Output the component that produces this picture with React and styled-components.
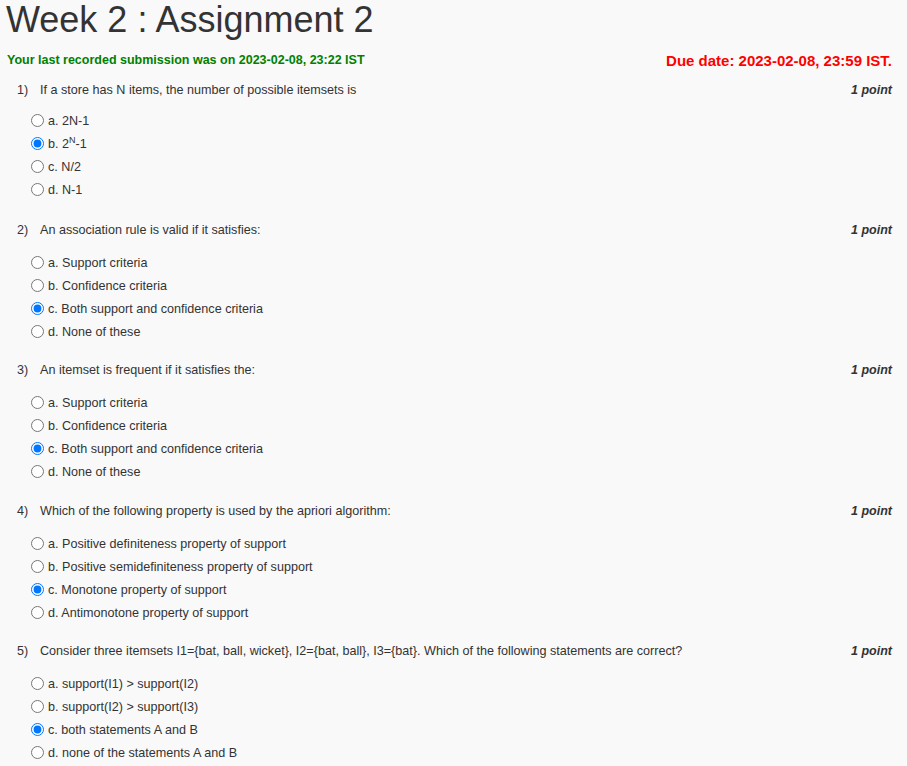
import React from "react";
import styled, { createGlobalStyle } from "styled-components";

const Global = createGlobalStyle`
  html, body { margin: 0; padding: 0; background: #f9f9f9; }
  body { font-family: "Liberation Sans", Arial, sans-serif; color: #333; }
`;

const Page = styled.div`
  padding: 0 15px 0 6px;
  width: 907px;
  box-sizing: border-box;
`;

const Title = styled.h1`
  margin: 0;
  font-size: 36px;
  font-weight: normal;
  line-height: 40px;
  color: #333;
`;

const StatusRow = styled.div`
  display: flex;
  justify-content: space-between;
  align-items: center;
  margin-top: 10px;
  height: 20px;
  padding-left: 1px;
`;

const Submitted = styled.span`
  color: #008000;
  font-weight: bold;
  font-size: 12.5px;
`;

const Due = styled.span`
  color: #f00;
  font-weight: bold;
  font-size: 15px;
`;

const QuestionList = styled.div`
  margin-top: 10px;
  display: flex;
  flex-direction: column;
`;

const Question = styled.div`
  height: ${(p) => p.$h}px;
`;

const Header = styled.div`
  display: flex;
  align-items: center;
  height: 20px;
  font-size: 12.6px;
`;

const Num = styled.span`
  width: 23px;
  padding-left: 11px;
  flex: none;
`;

const Text = styled.span`
  flex: 1;
`;

const Points = styled.span`
  font-weight: bold;
  font-style: italic;
  font-size: 12.5px;
`;

const Options = styled.div`
  margin-top: ${(p) => (p.$first ? 9 : 11)}px;
  display: flex;
  flex-direction: column;
`;

const Option = styled.label`
  display: flex;
  align-items: center;
  height: 23px;
  font-size: 12.6px;
  padding-left: 20px;
`;

const Radio = styled.input`
  width: 13px;
  height: 13px;
  margin: 0 4px 0 5px;
  accent-color: #0075ff;
`;

const Sup = styled.sup`
  font-size: 9px;
  line-height: 0;
`;

const questions = [
  {
    text: "If a store has N items, the number of possible itemsets is",
    opts: ["a. 2N-1", <>b. 2<Sup>N</Sup>-1</>, "c. N/2", "d. N-1"],
    sel: 1,
  },
  {
    text: "An association rule is valid if it satisfies:",
    opts: ["a. Support criteria", "b. Confidence criteria", "c. Both support and confidence criteria", "d. None of these"],
    sel: 2,
  },
  {
    text: "An itemset is frequent if it satisfies the:",
    opts: ["a. Support criteria", "b. Confidence criteria", "c. Both support and confidence criteria", "d. None of these"],
    sel: 2,
  },
  {
    text: "Which of the following property is used by the apriori algorithm:",
    opts: [
      "a. Positive definiteness property of support",
      "b. Positive semidefiniteness property of support",
      "c. Monotone property of support",
      "d. Antimonotone property of support",
    ],
    sel: 2,
  },
  {
    text: "Consider three itemsets I1={bat, ball, wicket}, I2={bat, ball}, I3={bat}. Which of the following statements are correct?",
    opts: [
      "a. support(I1) > support(I2)",
      "b. support(I2) > support(I3)",
      "c. both statements A and B",
      "d. none of the statements A and B",
    ],
    sel: 2,
  },
];

const heights = [140, 140, 141, 140, 140];

export default function App() {
  return (
    <Page>
      <Global />
      <Title>Week 2 : Assignment 2</Title>
      <StatusRow>
        <Submitted>Your last recorded submission was on 2023-02-08, 23:22 IST</Submitted>
        <Due>Due date: 2023-02-08, 23:59 IST.</Due>
      </StatusRow>
      <QuestionList>
        {questions.map((q, i) => (
          <Question key={i} $h={heights[i]}>
            <Header>
              <Num>{i + 1})</Num>
              <Text>{q.text}</Text>
              <Points>1 point</Points>
            </Header>
            <Options $first={i === 0}>
              {q.opts.map((o, j) => (
                <Option key={j}>
                  <Radio type="radio" name={`q${i}`} defaultChecked={j === q.sel} />
                  <span>{o}</span>
                </Option>
              ))}
            </Options>
          </Question>
        ))}
      </QuestionList>
    </Page>
  );
}
